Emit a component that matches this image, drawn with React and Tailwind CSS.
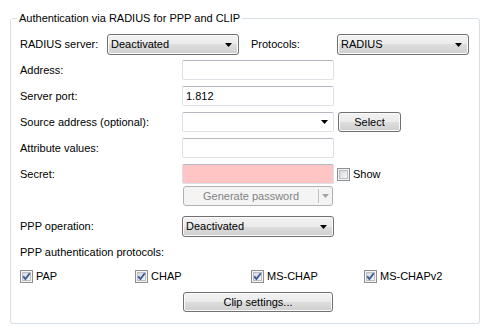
import React from "react";

const font = { fontFamily: '"Liberation Sans", Arial, sans-serif' };

const Arrow = ({ color = "#000" }) => (
  <svg width="7" height="4" viewBox="0 0 7 4">
    <polygon points="0,0 7,0 3.5,4" fill={color} />
  </svg>
);

const Check = ({ checked }) => (
  <svg width="13" height="13" viewBox="0 0 13 13" className="shrink-0">
    <defs>
      <linearGradient id="cbg" x1="0" y1="0" x2="1" y2="1">
        <stop offset="0" stopColor="#d3d6db" />
        <stop offset="1" stopColor="#f8f8f8" />
      </linearGradient>
    </defs>
    <rect x="0.5" y="0.5" width="12" height="12" fill="#f4f4f4" stroke="#8e8f8f" />
    <rect x="2.5" y="2.5" width="8" height="8" fill="url(#cbg)" stroke="#b9bec4" />
    {checked && (
      <path d="M3.2 6.4 L5.4 9 L9.8 3.2" fill="none" stroke="#3d5a98" strokeWidth="1.9" />
    )}
  </svg>
);

const Label = ({ children, className = "", color = "text-black" }) => (
  <span className={`text-[11px] leading-[13px] whitespace-nowrap ${color} ${className}`}>{children}</span>
);

const Select = ({ value, className = "" }) => (
  <div
    className={`flex items-center justify-between h-[21px] border border-[#707070] rounded-[3px] pl-[3px] pr-[6px] shadow-[inset_0_0_0_1px_#fbfbfb] bg-[linear-gradient(to_bottom,#f2f2f2_0%,#ebebeb_50%,#dddddd_50%,#cfcfcf_100%)] ${className}`}
  >
    <Label>{value}</Label>
    <Arrow />
  </div>
);

const Input = ({ value, className = "", bg = "bg-white" }) => (
  <div
    className={`flex items-center h-[20px] w-[152px] border border-[#dde1e7] border-t-[#b5b9c2] rounded-[2px] px-[3px] ${bg} ${className}`}
  >
    <Label>{value}</Label>
  </div>
);

const Button = ({ children, className = "" }) => (
  <div
    className={`flex items-center justify-center h-[20px] border border-[#707070] rounded-[3px] shadow-[inset_0_0_0_1px_#fbfbfb] bg-[linear-gradient(to_bottom,#f2f2f2_0%,#ebebeb_50%,#dddddd_50%,#cfcfcf_100%)] ${className}`}
  >
    <Label>{children}</Label>
  </div>
);

const Row = ({ label, children, className = "" }) => (
  <div className={`flex items-center ${className}`}>
    <Label className="w-[162px]">{label}</Label>
    {children}
  </div>
);

const Opt = ({ label, className }) => (
  <div className={`flex items-center gap-[3px] ${className}`}>
    <Check checked />
    <Label>{label}</Label>
  </div>
);

export default function App() {
  return (
    <div className="w-[490px] h-[332px] bg-white pt-[12px] pl-[10px]" style={font}>
      <fieldset className="w-[470px] border border-[#d5dfe5] rounded-[3px] pl-[6px] pt-[9px] pb-[11px]">
        <legend className="px-[2px] text-[11px] leading-[13px] text-black">
          Authentication via RADIUS for PPP and CLIP
        </legend>
        <div className="pl-[3px] flex flex-col">
          <div className="flex items-center h-[21px]">
            <Label className="w-[87px]">RADIUS server:</Label>
            <Select value="Deactivated" className="w-[132px]" />
            <Label className="w-[86px] ml-[12px]">Protocols:</Label>
            <Select value="RADIUS" className="w-[132px]" />
          </div>

          <Row label="Address:" className="mt-[5px]">
            <Input value="" />
          </Row>
          <Row label="Server port:" className="mt-[6px]">
            <Input value="1.812" />
          </Row>
          <Row label="Source address (optional):" className="mt-[6px]">
            <div className="flex items-center justify-end h-[20px] w-[152px] border border-[#dde1e7] border-t-[#b5b9c2] rounded-[2px] bg-white pr-[5px]">
              <Arrow />
            </div>
            <Button className="w-[63px] h-[19px] ml-[4px]">Select</Button>
          </Row>
          <Row label="Attribute values:" className="mt-[6px]">
            <Input value="" />
          </Row>
          <Row label="Secret:" className="mt-[6px]">
            <Input value="" bg="bg-[#ffc4c4]" className="border-[#c9d6e4] border-t-[#a9bdd6]" />
            <div className="flex items-center gap-[3px] ml-[3px]">
              <Check />
              <Label>Show</Label>
            </div>
          </Row>
          <div className="flex mt-[2px] pl-[163px]">
            <div className="flex items-center h-[20px] w-[150px] border border-[#adb2b5] rounded-[3px] bg-[#f4f4f4]">
              <div className="flex-1 flex justify-center">
                <Label color="text-[#838383]">Generate password</Label>
              </div>
              <div className="w-px h-[14px] bg-[#c3c3c3]" />
              <div className="w-[13px] flex justify-center">
                <Arrow color="#a3a3a3" />
              </div>
            </div>
          </div>
          <Row label="PPP operation:" className="mt-[10px]">
            <Select value="Deactivated" className="w-[152px]" />
          </Row>
          <Label className="mt-[9px]">PPP authentication protocols:</Label>
          <div className="flex items-center h-[13px] mt-[11px]">
            <Opt label="PAP" className="w-[115px]" />
            <Opt label="CHAP" className="w-[116px]" />
            <Opt label="MS-CHAP" className="w-[113px]" />
            <Opt label="MS-CHAPv2" />
          </div>
          <div className="flex mt-[9px] pl-[163px]">
            <Button className="w-[150px]">Clip settings...</Button>
          </div>
        </div>
      </fieldset>
    </div>
  );
}
